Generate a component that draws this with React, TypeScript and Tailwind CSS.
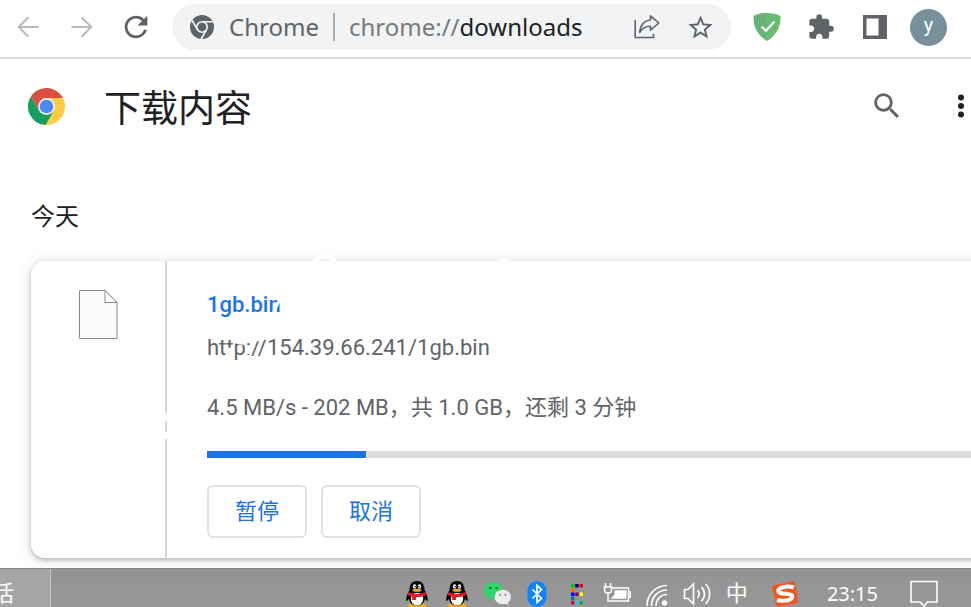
import type { ReactNode } from 'react'
import { MdExtension, MdRefresh, MdSearch, MdStarBorder } from 'react-icons/md'

interface IconProps {
  className?: string
}

interface DownloadItem {
  name: string
  url: string
  status: string
  percent: number
}

const download: DownloadItem = {
  name: '1gb.bin',
  url: 'http://154.39.66.241/1gb.bin',
  status: '4.5 MB/s - 202 MB，共 1.0 GB，还剩 3 分钟',
  percent: 19.7
}

function ArrowIcon({ className }: IconProps) {
  return (
    <svg className={className} viewBox="0 0 24 24" fill="none" stroke="currentColor" strokeWidth={2.2}>
      <path d="M23.500 12H2.500M12.500 1.300L1.800 12l10.700 10.700" />
    </svg>
  )
}

function ChromeMonoIcon({ className }: IconProps) {
  return (
    <svg className={className} viewBox="0 0 48 48">
      <circle cx="24" cy="24" r="24" fill="#5f6368" />
      <g fill="none" stroke="#f1f3f4" strokeWidth={3.4}>
        <circle cx="24" cy="24" r="10.5" />
        <path d="M24 13.5H47M33.1 29.3L22 48.5M14.9 29.3L3.4 9.4" />
      </g>
    </svg>
  )
}

function ChromeLogo({ className }: IconProps) {
  return (
    <svg className={className} viewBox="0 0 48 48">
      <path fill="#db4f40" d="M24 13h21.3A24 24 0 0 0 3.8 11l10.7 18.5z" />
      <path fill="#ffcd41" d="M45.3 13A24 24 0 0 1 22.9 48l10.6-18.5L24 13z" />
      <path fill="#16a05d" d="M22.9 48A24 24 0 0 1 3.8 11l10.7 18.5h19z" />
      <circle cx="24" cy="24" r="11" fill="#f1f1f1" />
      <circle cx="24" cy="24" r="8.8" fill="#4a8af4" />
    </svg>
  )
}

function ShareIcon({ className }: IconProps) {
  return (
    <svg className={className} viewBox="0 0 26 26" fill="none" stroke="currentColor" strokeWidth={1.6}>
      <path d="M1.2 6v17.5h18.3v-3.8" />
      <path strokeLinejoin="round" d="M16.5 1.8l8.3 7.2-8.3 7.2v-4C11.5 12.2 8 14 5.8 18.5 6 11.500 10 6.500 16.500 6z" />
    </svg>
  )
}

function ShieldIcon({ className }: IconProps) {
  return (
    <svg className={className} viewBox="0 0 28 28">
      <path fill="#67b279" d="M14 0C9.500 0 4.500.8.500 2.900.500 7.500 0 19 14 28z" />
      <path fill="#68bc71" d="M14 0c4.500 0 9.500.8 13.500 2.900C27.500 7.500 28 19 14 28z" />
      <path fill="none" stroke="#fff" strokeWidth={2.2} d="M8.600 13.400l4.300 4.400 8.600-9.400" />
    </svg>
  )
}

function SidePanelIcon({ className }: IconProps) {
  return (
    <svg className={className} viewBox="0 0 24 24">
      <path fill="currentColor" fillRule="evenodd" d="M0 0h24v24H0zM3.500 3.500v17h12v-17z" />
    </svg>
  )
}

function FileIcon({ className }: IconProps) {
  return (
    <svg className={className} viewBox="0 0 39 49" stroke="#8a8a8a">
      <path fill="#fafafa" d="M.5.5h25.500l12 12v36H.5z" />
      <path fill="#fff" d="M26 .5v12h12z" />
    </svg>
  )
}

function PenguinIcon({ className }: IconProps) {
  return (
    <svg className={className} viewBox="0 0 28 28">
      <ellipse cx="9.500" cy="25.500" rx="5" ry="2" fill="#f5a623" />
      <ellipse cx="18.500" cy="25.500" rx="5" ry="2" fill="#f5a623" />
      <path fill="#000" d="M14 1C8.500 1 6.500 5 6.500 10c-2 3.500-3.500 7-3.300 10.500.3 1.500 1.800-.2 2.800-2 .5 4 3 7 8 7s7.500-3 8-7c1 1.800 2.500 3.500 2.800 2C25 17 23.500 13.500 21.500 10 21.500 5 19.500 1 14 1z" />
      <ellipse cx="14" cy="19" rx="6.200" ry="6.300" fill="#fff" />
      <ellipse cx="11.600" cy="6.500" rx="1.700" ry="2.300" fill="#fff" />
      <ellipse cx="16.400" cy="6.500" rx="1.700" ry="2.300" fill="#fff" />
      <circle cx="12.100" cy="6.700" r=".8" />
      <circle cx="15.900" cy="6.700" r=".8" />
      <ellipse cx="14" cy="10.300" rx="4.500" ry="1.500" fill="#f5a623" />
      <path fill="#e5192d" d="M5.500 12c5 2.600 12 2.600 17 0l.8 3c-3.500 1.800-7 2.200-10.300 2.100V20H9v-3.500c-1.500-.3-3-.8-4.300-1.500z" />
    </svg>
  )
}

function WeChatIcon({ className }: IconProps) {
  return (
    <svg className={className} viewBox="0 0 28 28">
      <path fill="#2fd568" d="M10.500 2C5 2 .8 5.700.8 10.500c0 2.800 1.400 5.100 3.700 6.600l-.8 3.200 3.600-1.800c1.100.3 2.100.4 3.200.4 5.400 0 9.700-3.700 9.700-8.400S15.900 2 10.500 2z" />
      <circle cx="7.200" cy="8" r="1.300" fill="#167a3c" />
      <circle cx="13.600" cy="8" r="1.300" fill="#167a3c" />
      <path fill="#ececec" d="M19.800 9.800c-4.600 0-8.300 3.200-8.300 7.200s3.700 7.200 8.300 7.200c1 0 2-.1 2.900-.4l2.800 1.500-.6-2.500c1.900-1.400 3-3.400 3-5.800 0-4-3.500-7.200-8.100-7.200z" />
      <circle cx="17" cy="14.800" r="1.100" fill="#888" />
      <circle cx="22.300" cy="14.800" r="1.100" fill="#888" />
    </svg>
  )
}

function BluetoothIcon({ className }: IconProps) {
  return (
    <svg className={className} viewBox="0 0 28 28">
      <rect x="4.500" y="1" width="19" height="26" rx="9.500" fill="#0a84ff" />
      <path fill="none" stroke="#fff" strokeWidth={1.700} d="M9.500 9.500l9 9-4.500 4V5.500l4.500 4-9 9" />
    </svg>
  )
}

function PixelIcon({ className }: IconProps) {
  return (
    <svg className={className} viewBox="0 0 28 28">
      <path fill="#00c800" d="M8 4h3.500v3.500H8z" />
      <path fill="#00007d" d="M12.200 4h3.500v3.500h-3.500z" />
      <path fill="#f00020" d="M16.500 4H20v3.500h-3.500zM8 21h3.500v3.500H8z" />
      <path fill="#ff6a00" d="M8 8.300h3.500v3.500H8z" />
      <path fill="#0000ff" d="M8 12.500h3.500V16H8z" />
      <path fill="#7d007d" d="M12.200 12.500h3.500V16h-3.500z" />
      <path fill="#ffff00" d="M16.500 12.500H20V16h-3.500z" />
      <path fill="#008080" d="M8 16.700h3.500v3.500H8z" />
      <path fill="#20c8ff" d="M12.200 21h3.500v3.500h-3.500z" />
      <path fill="#00b050" d="M16.500 21H20v3.500h-3.500z" />
    </svg>
  )
}

function BatteryIcon({ className }: IconProps) {
  return (
    <svg className={className} viewBox="0 0 28 28" fill="none" stroke="#fff" strokeWidth={1.500}>
      <path d="M9.500 8h16v13H7M25.500 12h2v5h-2" />
      <path fill="#fff" stroke="none" d="M11.500 10.200h12v8.600H7.500l4-4z" />
      <path d="M2.500 3v4M7.500 3v4M.5 7h9M1.500 7v3c0 2 1.500 3 3.500 3s3.500-1 3.500-3V7M5 13v8h2.500" />
    </svg>
  )
}

function WifiIcon({ className }: IconProps) {
  return (
    <svg className={className} viewBox="0 0 28 28" fill="none" stroke="#fff" strokeWidth={1.700}>
      <path d="M4 26C4 14 13 5.500 24 5.500M8.500 26c0-9 6.500-16 15.500-16M13 26c0-6.500 4.500-11.500 11-11.500" />
      <circle cx="21.500" cy="23" r="2.700" fill="#fff" stroke="none" />
    </svg>
  )
}

function VolumeIcon({ className }: IconProps) {
  return (
    <svg className={className} viewBox="0 0 28 28" fill="none" stroke="#fff" strokeWidth={1.700}>
      <path d="M1.500 9.500h3.500l5.500-5.500v20L5 18.500H1.500z" />
      <path d="M14.500 10c2.200 2.200 2.200 5.800 0 8M18.500 7c4 4 4 10 0 14M22.500 4c5.500 5.500 5.500 14.500 0 20" />
    </svg>
  )
}

function SogouIcon({ className }: IconProps) {
  return (
    <svg className={className} viewBox="0 0 28 28">
      <path fill="#f4551e" d="M3.300 5L21.500 1.600c1.300-.2 2.300.3 2.600 1.600l3 17.200c.2 1.500-.4 2.500-1.800 2.800L8 26.500c-1.500.2-2.500-.3-2.800-1.700L1.400 8C1.100 6.500 1.800 5.300 3.300 5z" />
      <path fill="none" stroke="#fff" strokeWidth={4} d="M22.800 7.500C17 5.500 7.300 7 7.300 11c0 4 14 1.500 14 5.500S12 21.800 6 20" />
    </svg>
  )
}

function NotificationIcon({ className }: IconProps) {
  return (
    <svg className={className} viewBox="0 0 28 28" fill="none" stroke="#fff" strokeWidth={1.600}>
      <path d="M1 1.500h26V22h-9.500L14 26l-4-4H1z" />
    </svg>
  )
}

function IconButton({ label, className, children }: { label: string; className: string; children: ReactNode }) {
  return (
    <button type="button" aria-label={label} className={`flex shrink-0 items-center justify-center ${className}`}>
      {children}
    </button>
  )
}

function Toolbar() {
  return (
    <header className="flex items-center border-b-2 border-[#dadcde] pt-1 pr-6 pb-[7px] pl-4">
      <nav className="flex items-center gap-[30px] text-[#b9bbbd]">
        <IconButton label="返回" className="size-6"><ArrowIcon className="size-[22px]" /></IconButton>
        <IconButton label="前进" className="size-6"><ArrowIcon className="size-[22px] rotate-180" /></IconButton>
        <IconButton label="重新加载" className="size-6 text-[#5f6368]"><MdRefresh className="size-[34px] shrink-0" /></IconButton>
      </nav>

      <div className="mr-[17px] ml-6 flex h-[46px] min-w-0 flex-1 items-center rounded-full bg-[#f1f3f4] px-[18px] font-['Noto_Sans',sans-serif] text-[24px] leading-8 text-[#5f6368]">
        <button type="button" className="flex items-center gap-[15px]">
          <ChromeMonoIcon className="size-6" />
          Chrome
        </button>
        <span className="mx-3.5 h-7 w-0.5 bg-[#a9acae]" />
        <span className="min-w-0 flex-1 truncate text-[#777a7d]">
          chrome://<span className="text-[#202124]">downloads</span>
        </span>
        <div className="flex items-center gap-[27px]">
          <IconButton label="分享" className="size-[26px]"><ShareIcon className="size-[26px]" /></IconButton>
          <IconButton label="收藏" className="size-[26px]"><MdStarBorder className="size-[29px] shrink-0" /></IconButton>
        </div>
      </div>

      <div className="flex items-center gap-[17px] text-[#5f6368]">
        <IconButton label="AdGuard" className="size-[37px]"><ShieldIcon className="size-7" /></IconButton>
        <IconButton label="扩展程序" className="size-[37px]"><MdExtension className="size-7" /></IconButton>
        <IconButton label="侧边栏" className="size-[37px]"><SidePanelIcon className="size-6" /></IconButton>
        <button type="button" className="size-[37px] rounded-full bg-[#78909c] pb-1 font-['Roboto',sans-serif] text-[20px] leading-8 text-white">
          y
        </button>
      </div>
    </header>
  )
}

function PageHeader() {
  return (
    <div className="flex h-[94px] items-center pl-7">
      <ChromeLogo className="size-[37px]" />
      <h1 className="ml-[39px] pt-2 text-[37px] leading-[48px] text-[#202124]">下载内容</h1>
      <div className="ml-auto flex items-center gap-12">
        <IconButton label="搜索" className="size-8 text-[#5f6368]"><MdSearch className="size-[34px] shrink-0" /></IconButton>
        <IconButton label="更多操作" className="w-5 text-[#202124]">
          <svg className="h-6 w-2" viewBox="0 0 8 24" fill="currentColor">
            <circle cx="4" cy="3.500" r="3" />
            <circle cx="4" cy="12" r="3" />
            <circle cx="4" cy="20.500" r="3" />
          </svg>
        </IconButton>
      </div>
    </div>
  )
}

// White pen marks lying over parts of the card
function PenMarks() {
  return (
    <svg className="pointer-events-none absolute -top-4 left-0 h-[240px] w-[520px]" viewBox="0 -16 520 240" fill="none" stroke="#fff" strokeWidth={4} aria-hidden="true">
      <path d="M284 1c4-8 16-8 20 0" strokeWidth={5} />
      <path d="M468-1h10" strokeWidth={3} />
      <path d="M251 33l-9 20" strokeWidth={3} />
      <path d="M198 87l3 8M203 80l10 2M215 91h5M220 79l9-1M228 78l9-2" />
      <path d="M131 155l8 3M131 173l8 3" strokeWidth={7} />
    </svg>
  )
}

function DownloadCard({ item }: { item: DownloadItem }) {
  return (
    <article className="relative mt-7 -mr-[43px] ml-[31px] flex rounded-[14px] bg-white shadow-[0_2px_4px_rgba(60,64,67,0.3),0_2px_16px_rgba(60,64,67,0.16)]">
      <div className="flex w-[136px] shrink-0 justify-center border-r-2 border-[#d4d5d6] pt-[29px]">
        <FileIcon className="h-[49px] w-[39px]" />
      </div>
      <div className="flex-1 pt-7 pb-5 pl-10 text-[22px] leading-8 text-[#5f6368]">
        <a href="#" className="block font-medium text-[#1a73e8]">{item.name}</a>
        <p className="mt-[11px]">{item.url}</p>
        <p className="mt-7">{item.status}</p>
        <progress
          aria-label={item.name}
          value={item.percent}
          max={100}
          className="mt-[27px] block h-[7px] w-full appearance-none [&::-webkit-progress-bar]:bg-[#dddddd] [&::-webkit-progress-value]:bg-[#1a73e8]"
        />
        <div className="mt-[27px] flex gap-3.5 text-[#1a73e8]">
          <button type="button" className="h-[53px] w-[100px] rounded-md border-2 border-[#dfe1e5]">暂停</button>
          <button type="button" className="h-[53px] w-[100px] rounded-md border-2 border-[#dfe1e5]">取消</button>
        </div>
      </div>
      <PenMarks />
    </article>
  )
}

function Taskbar() {
  return (
    <footer className="relative mt-2.5 flex h-[50px] shrink-0 items-center border-t border-[#858585] bg-linear-to-b from-[#949494] to-[#989898] text-[22px] text-white">
      <button type="button" className="flex h-full w-[51px] items-center justify-end overflow-hidden border-r border-[#c4c4c4] bg-[#a5a5a5] pr-9">
        <span className="shrink-0">话</span>
      </button>
      <div className="ml-auto flex items-center gap-3">
        <PenguinIcon className="size-7" />
        <PenguinIcon className="size-7" />
        <WeChatIcon className="size-7" />
        <BluetoothIcon className="size-7" />
        <PixelIcon className="size-7" />
        <BatteryIcon className="size-7" />
        <WifiIcon className="size-7" />
        <VolumeIcon className="size-7" />
        <span className="w-7 text-center leading-8">中</span>
      </div>
      <SogouIcon className="ml-5 size-7" />
      <time className="ml-7 font-['Noto_Sans',sans-serif] text-[20px] leading-8">23:15</time>
      <NotificationIcon className="mr-[33px] ml-8 size-7" />
    </footer>
  )
}

export default function App() {
  return (
    <div className="flex h-screen flex-col overflow-hidden bg-white font-['Roboto','Noto_Sans_CJK_SC',sans-serif]">
      <Toolbar />
      <main className="shrink-0">
        <PageHeader />
        <h2 className="mt-12 ml-[31px] text-[24px] leading-8 text-[#202124]">今天</h2>
        <DownloadCard item={download} />
      </main>
      <Taskbar />
    </div>
  )
}
